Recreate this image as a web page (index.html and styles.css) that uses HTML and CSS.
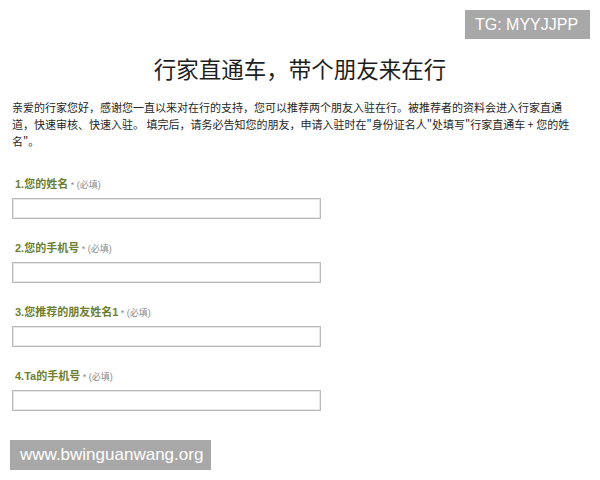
FILE: index.html
```html
<!DOCTYPE html>
<html lang="zh-CN">
<head>
<meta charset="utf-8">
<title>行家直通车</title>
<link rel="stylesheet" href="styles.css">
</head>
<body>
<div class="page">
  <h1 class="title">行家直通车，带个朋友来在行</h1>
  <p class="intro">亲爱的行家您好，感谢您一直以来对在行的支持，您可以推荐两个朋友入驻在行。被推荐者的资料会进入行家直通道，快速审核、快速入驻。 填完后，请务必告知您的朋友，申请入驻时在"身份证名人"处填写"行家直通车 + 您的姓名"。</p>
  <form class="form">
    <div class="field">
      <label class="label">1.您的姓名<span class="req"> * (必填)</span></label>
      <input class="input" type="text">
    </div>
    <div class="field">
      <label class="label">2.您的手机号<span class="req"> * (必填)</span></label>
      <input class="input" type="text">
    </div>
    <div class="field">
      <label class="label">3.您推荐的朋友姓名1<span class="req"> * (必填)</span></label>
      <input class="input" type="text">
    </div>
    <div class="field">
      <label class="label">4.Ta的手机号<span class="req"> * (必填)</span></label>
      <input class="input" type="text">
    </div>
  </form>
</div>
<div class="badge badge-tg">TG: MYYJJPP</div>
<div class="badge badge-site">www.bwinguanwang.org</div>
</body>
</html>
```
FILE: styles.css
```css
html, body {
  margin: 0;
  padding: 0;
  background: #ffffff;
}
body {
  width: 600px;
  height: 480px;
  position: relative;
  overflow: hidden;
  font-family: "Noto Sans CJK SC", "Liberation Sans", sans-serif;
  color: #333;
}
.page {
  padding: 53px 12px 0 12px;
}
.title {
  margin: 0;
  text-align: center;
  font-size: 22.5px;
  line-height: 30px;
  font-weight: 400;
  color: #1e1e1e;
}
.intro {
  width: 558px;
  margin: 16px 0 0 0;
  font-size: 11px;
  line-height: 17px;
  color: #262626;
}
.form {
  margin-top: 26px;
}
.field {
  display: flex;
  flex-direction: column;
  align-items: flex-start;
  gap: 5px;
  margin-bottom: 21px;
}
.label {
  font-family: "Liberation Sans", "Noto Sans CJK SC", sans-serif;
  font-size: 11px;
  line-height: 16px;
  font-weight: 700;
  color: #6e7f32;
  padding-left: 3px;
}
.req {
  font-weight: 400;
  font-size: 9px;
  color: #8a8a8a;
}
.input {
  box-sizing: border-box;
  width: 309px;
  height: 21px;
  margin: 0;
  padding: 0 4px;
  border: 1px solid #b9b9b9;
  background: #fff;
  box-shadow: inset 0 0 0 1px #e6e6e6;
}
.badge {
  position: absolute;
  background: #a8a8a8;
  color: #ffffff;
  font-family: "Liberation Sans", sans-serif;
  display: flex;
  align-items: center;
  box-sizing: border-box;
}
.badge-tg {
  top: 10px;
  left: 465px;
  width: 125px;
  height: 29px;
  font-size: 16px;
  padding-left: 10px;
}
.badge-site {
  top: 440px;
  left: 10px;
  width: 201px;
  height: 30px;
  font-size: 17px;
  padding-left: 10px;
}
```
